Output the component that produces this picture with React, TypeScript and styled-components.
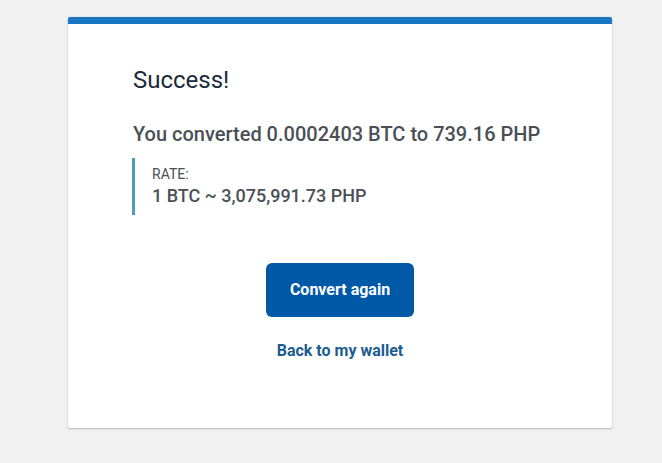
import React from "react";
import styled, { createGlobalStyle } from "styled-components";

const Global = createGlobalStyle`
  html, body { margin: 0; padding: 0; background: #f1f1f1; }
  body { font-family: Roboto, "Liberation Sans", Arial, sans-serif; }
`;

const Page = styled.div`
  padding: 17px 0 0 68px;
  min-height: 463px;
  box-sizing: border-box;
`;

const Card = styled.div`
  width: 544px;
  box-sizing: border-box;
  background: #ffffff;
  border-top: 7px solid #1977c3;
  border-radius: 2px;
  box-shadow: 0 1px 2px rgba(0, 0, 0, 0.22), 0 0 1px rgba(0, 0, 0, 0.12);
  padding: 42px 64px 67px 64px;
  display: flex;
  flex-direction: column;
`;

const Title = styled.h1`
  margin: 0;
  font-size: 24px;
  line-height: 28px;
  font-weight: 400;
  color: #1b2a3a;
  padding-left: 1px;
`;

const Summary = styled.p`
  margin: 28px 0 0;
  font-size: 20px;
  line-height: 24px;
  font-weight: 500;
  color: #4a5056;
  padding-left: 1px;
`;

const Rate = styled.div`
  margin-top: 11.5px;
  border-left: 3px solid #4a9fb4;
  padding: 8px 0 8px 17px;
  display: flex;
  flex-direction: column;
  gap: 3px;
`;

const RateLabel = styled.span`
  font-size: 14px;
  line-height: 16px;
  color: #4a5056;
`;

const RateValue = styled.span`
  font-size: 18px;
  line-height: 22px;
  font-weight: 500;
  color: #4a5056;
`;

const Actions = styled.div`
  margin-top: 48px;
  display: flex;
  flex-direction: column;
  align-items: center;
  gap: 24px;
`;

const Primary = styled.button`
  width: 148px;
  height: 54px;
  border: none;
  border-radius: 6px;
  background: #0059a7;
  color: #ffffff;
  font-family: inherit;
  font-size: 16px;
  font-weight: 700;
  cursor: pointer;
`;

const LinkButton = styled.a`
  font-size: 16px;
  line-height: 20px;
  font-weight: 700;
  color: #1b5c90;
  text-decoration: none;
  cursor: pointer;
`;

export default function App() {
  return (
    <>
      <Global />
      <Page>
        <Card>
          <Title>Success!</Title>
          <Summary>You converted 0.0002403 BTC to 739.16 PHP</Summary>
          <Rate>
            <RateLabel>RATE:</RateLabel>
            <RateValue>1 BTC ~ 3,075,991.73 PHP</RateValue>
          </Rate>
          <Actions>
            <Primary>Convert again</Primary>
            <LinkButton>Back to my wallet</LinkButton>
          </Actions>
        </Card>
      </Page>
    </>
  );
}
